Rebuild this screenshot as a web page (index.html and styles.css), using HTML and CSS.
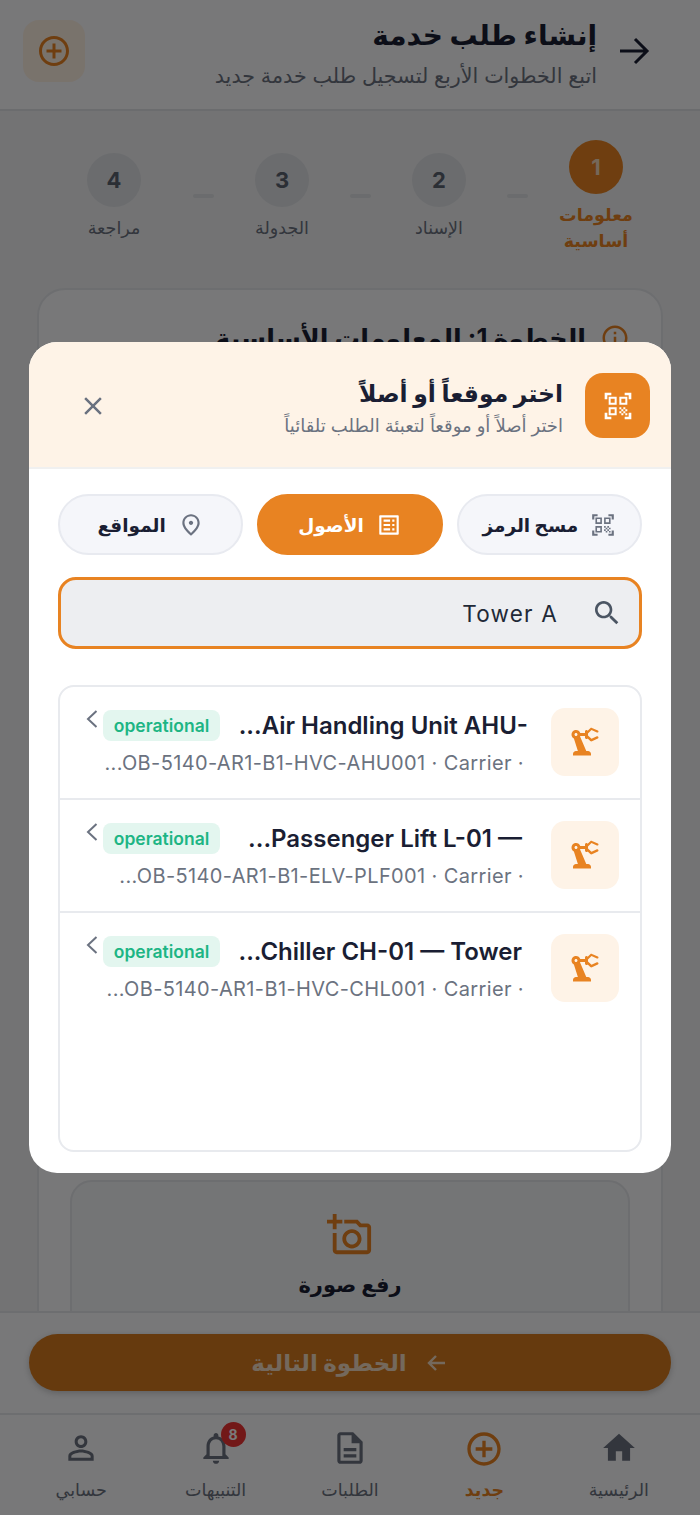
FILE: index.html
```html
<!DOCTYPE html>
<html lang="ar" dir="rtl">
<head>
<meta charset="utf-8">
<title>إنشاء طلب خدمة</title>
<link rel="stylesheet" href="styles.css">
</head>
<body>
<svg class="sprite" aria-hidden="true">
  <symbol id="i-robot" viewBox="0 0 24 24"><path d="M19.93,8.21l-3.6,1.68L14,7.7V6.3l2.33-2.33l3.6,1.68c.38.18.82.01 1-.36.18-.38.01-.82-.36-1L16.65,2.6c-.38-.18-.83-.1-1.13.2l-1.74,1.74C13.6,4.16,13.32,4,13,4c-.55,0-1,.45-1,1v1H8.82C8.34,4.65,6.98,3.73,5.4,4.07c-1.16.25-2.15,1.25-2.36,2.43c-.24,1.36.44,2.6,1.56,3.21L7.25,18H6c-1.1,0-2,.9-2,2v1h12v-1c0-1.1-.9-2-2-2h-1.15L8.72,8.39c.08-.12.1-.29.1-.39H12v1c0,.55.45,1,1,1c.32,0,.6-.16.78-.4l1.74,1.74c.3.3.75.38,1.13.2l3.92-1.83c.38-.18.54-.62.36-1C20.75,8.2,20.31,8.03,19.93,8.21z M6,8C5.45,8,5,7.55,5,7s.45-1,1-1,1,.45,1,1S6.55,8,6,8z"/></symbol>
  <symbol id="i-qr" viewBox="0 0 24 24"><path d="M9.5 6.5v3h-3v-3h3M11 5H5v6h6V5zm-1.5 9.5v3h-3v-3h3M11 13H5v6h6v-6zm6.5-6.5v3h-3v-3h3M19 5h-6v6h6V5zm-6 8h1.5v1.5H13V13zm1.5 1.5H16V16h-1.5v-1.5zM16 13h1.5v1.5H16V13zm-3 3h1.5v1.5H13V16zm1.5 1.5H16V19h-1.5v-1.5zM16 16h1.5v1.5H16V16zm1.5-1.5H19V16h-1.5v-1.5zm0 3H19V19h-1.5v-1.5zM22 7h-2V4h-3V2h5v5zm0 15v-5h-2v3h-3v2h5zM2 22h5v-2H4v-3H2v5zM2 2v5h2V4h3V2H2z"/></symbol>
  <symbol id="i-pin" viewBox="0 0 24 24"><path d="M12 12c-1.1 0-2-.9-2-2s.9-2 2-2 2 .9 2 2-.9 2-2 2zm6-1.8C18 6.57 15.35 4 12 4s-6 2.57-6 6.2c0 2.34 1.95 5.44 6 9.14 4.05-3.7 6-6.8 6-9.14zM12 2c4.2 0 8 3.22 8 8.2 0 3.32-2.67 7.25-8 11.8-5.33-4.55-8-8.48-8-11.8C4 5.22 7.8 2 12 2z"/></symbol>
  <symbol id="i-list" viewBox="0 0 24 24"><path d="M19 5v14H5V5h14m1.1-2H3.9c-.5 0-.9.4-.9.9v16.2c0 .4.4.9.9.9h16.2c.4 0 .9-.5.9-.9V3.9c0-.5-.5-.9-.9-.9zM7 7h6v2H7V7zm0 4h6v2H7v-2zm0 4h6v2H7zM15 7h2v2h-2zm0 4h2v2h-2zm0 4h2v2h-2z"/></symbol>
  <symbol id="i-search" viewBox="0 0 24 24"><path d="M15.5 14h-.79l-.28-.27C15.41 12.59 16 11.11 16 9.5 16 5.91 13.09 3 9.5 3S3 5.91 3 9.5 5.91 16 9.5 16c1.61 0 3.09-.59 4.23-1.57l.27.28v.79l5 4.99L20.49 19l-4.99-5zm-6 0C7.01 14 5 11.99 5 9.5S7.01 5 9.5 5 14 7.01 14 9.5 11.99 14 9.5 14z"/></symbol>
  <symbol id="i-close" viewBox="0 0 24 24"><path d="M19 6.41L17.59 5 12 10.59 6.41 5 5 6.41 10.59 12 5 17.59 6.41 19 12 13.41 17.59 19 19 17.59 13.41 12z"/></symbol>
  <symbol id="i-add" viewBox="0 0 24 24"><path d="M13 7h-2v4H7v2h4v4h2v-4h4v-2h-4V7zm-1-5C6.48 2 2 6.48 2 12s4.48 10 10 10 10-4.48 10-10S17.52 2 12 2zm0 18c-4.41 0-8-3.59-8-8s3.59-8 8-8 8 3.59 8 8-3.59 8-8 8z"/></symbol>
  <symbol id="i-info" viewBox="0 0 24 24"><path d="M11 7h2v2h-2zm0 4h2v6h-2zm1-9C6.48 2 2 6.48 2 12s4.48 10 10 10 10-4.48 10-10S17.52 2 12 2zm0 18c-4.41 0-8-3.59-8-8s3.59-8 8-8 8 3.59 8 8-3.59 8-8 8z"/></symbol>
  <symbol id="i-photo" viewBox="0 0 24 24"><path d="M21 6h-3.17L16 4H9v2h6.12l1.83 2H21v12H5v-9H3v9c0 1.1.9 2 2 2h16c1.1 0 2-.9 2-2V8c0-1.1-.9-2-2-2zM8 14c0 2.76 2.24 5 5 5s5-2.24 5-5-2.24-5-5-5-5 2.24-5 5zm5-3c1.65 0 3 1.35 3 3s-1.35 3-3 3-3-1.35-3-3 1.35-3 3-3zM5 6h3V4H5V1H3v3H0v2h3v3h2z"/></symbol>
  <symbol id="i-home" viewBox="0 0 24 24"><path d="M10 20v-6h4v6h5v-8h3L12 3 2 12h3v8z"/></symbol>
  <symbol id="i-doc" viewBox="0 0 24 24"><path d="M8 16h8v2H8zm0-4h8v2H8zm6-10H6c-1.1 0-2 .9-2 2v16c0 1.1.89 2 1.99 2H18c1.1 0 2-.9 2-2V8l-6-6zm4 18H6V4h7v5h5v11z"/></symbol>
  <symbol id="i-bell" viewBox="0 0 24 24"><path d="M12 22c1.1 0 2-.9 2-2h-4c0 1.1.9 2 2 2zm6-6v-5c0-3.07-1.63-5.64-4.5-6.32V4c0-.83-.67-1.5-1.5-1.5s-1.5.67-1.5 1.5v.68C7.64 5.36 6 7.92 6 11v5l-2 2v1h16v-1l-2-2zm-2 1H8v-6c0-2.48 1.51-4.5 4-4.5s4 2.02 4 4.5v6z"/></symbol>
  <symbol id="i-user" viewBox="0 0 24 24"><path d="M12 5.9c1.16 0 2.1.94 2.1 2.1s-.94 2.1-2.1 2.1S9.9 9.16 9.9 8s.94-2.1 2.1-2.1m0 9c2.97 0 6.1 1.46 6.1 2.1v1.1H5.9V17c0-.64 3.13-2.1 6.1-2.1M12 4C9.79 4 8 5.79 8 8s1.79 4 4 4 4-1.79 4-4-1.79-4-4-4zm0 9c-2.67 0-8 1.34-8 4v3h16v-3c0-2.66-5.33-4-8-4z"/></symbol>
</svg>

<div class="page">
  <header class="top">
    <svg class="top-back" viewBox="0 0 32 32"><path d="M2 16h27M17 4l12 12-12 12"/></svg>
    <div class="top-text">
      <h1 class="top-title">إنشاء طلب خدمة</h1>
      <p class="top-sub">اتبع الخطوات الأربع لتسجيل طلب خدمة جديد</p>
    </div>
    <div class="top-tile"><svg class="ic ic-36"><use href="#i-add"/></svg></div>
  </header>

  <main class="main">
    <div class="steps">
      <div class="step step-on"><span class="step-num">1</span><span class="step-label">معلومات<br>أساسية</span></div>
      <span class="dash"></span>
      <div class="step"><span class="step-num">2</span><span class="step-label">الإسناد</span></div>
      <span class="dash"></span>
      <div class="step"><span class="step-num">3</span><span class="step-label">الجدولة</span></div>
      <span class="dash"></span>
      <div class="step step-last"><span class="step-num">4</span><span class="step-label">مراجعة</span></div>
    </div>

    <section class="card">
      <div class="card-head">
        <svg class="ic ic-30"><use href="#i-info"/></svg>
        <h2 class="card-title">الخطوة 1: المعلومات الأساسية</h2>
      </div>
      <div class="upload">
        <svg class="ic ic-46"><use href="#i-photo"/></svg>
        <strong class="upload-title">رفع صورة</strong>
      </div>
    </section>
  </main>

  <div class="action">
    <button class="next"><svg class="next-arrow" viewBox="0 0 24 24"><path d="M20 12H4M11 5l-7 7 7 7"/></svg><span>الخطوة التالية</span></button>
  </div>

  <nav class="nav">
    <a class="nav-item"><svg class="ic ic-38"><use href="#i-home"/></svg><span>الرئيسية</span></a>
    <a class="nav-item nav-on"><svg class="ic ic-40"><use href="#i-add"/></svg><span>جديد</span></a>
    <a class="nav-item"><svg class="ic ic-38"><use href="#i-doc"/></svg><span>الطلبات</span></a>
    <a class="nav-item"><span class="bell"><svg class="ic ic-38"><use href="#i-bell"/></svg><b class="badge">8</b></span><span>التنبيهات</span></a>
    <a class="nav-item"><svg class="ic ic-38"><use href="#i-user"/></svg><span>حسابي</span></a>
  </nav>

  <div class="overlay">
    <div class="modal">
      <div class="modal-head">
        <div class="modal-tile"><svg class="ic ic-32"><use href="#i-qr"/></svg></div>
        <div class="modal-text">
          <h3 class="modal-title">اختر موقعاً أو أصلاً</h3>
          <p class="modal-sub">اختر أصلاً أو موقعاً لتعبئة الطلب تلقائياً</p>
        </div>
        <svg class="ic ic-30 modal-close"><use href="#i-close"/></svg>
      </div>
      <div class="modal-body">
        <div class="tabs">
          <button class="tab"><svg class="ic ic-26"><use href="#i-qr"/></svg><span>مسح الرمز</span></button>
          <button class="tab tab-on"><svg class="ic ic-26"><use href="#i-list"/></svg><span>الأصول</span></button>
          <button class="tab"><svg class="ic ic-26"><use href="#i-pin"/></svg><span>المواقع</span></button>
        </div>
        <div class="search">
          <svg class="ic ic-32"><use href="#i-search"/></svg>
          <span class="search-text">Tower A</span>
        </div>
        <div class="list">
          <div class="row">
            <div class="row-tile"><svg class="ic ic-36"><use href="#i-robot"/></svg></div>
            <div class="row-body">
              <div class="row-top"><span class="row-title" dir="ltr">...Air Handling Unit AHU-</span><span class="pill">operational</span></div>
              <div class="row-sub" dir="ltr">...OB-5140-AR1-B1-HVC-AHU001 · Carrier ·</div>
            </div>
            <svg class="chev" viewBox="0 0 12 18"><path d="M10.5 1L2 9l8.5 8"/></svg>
          </div>
          <div class="row">
            <div class="row-tile"><svg class="ic ic-36"><use href="#i-robot"/></svg></div>
            <div class="row-body">
              <div class="row-top"><span class="row-title" dir="ltr">...Passenger Lift L-01 —&nbsp;</span><span class="pill">operational</span></div>
              <div class="row-sub" dir="ltr">...OB-5140-AR1-B1-ELV-PLF001 · Carrier ·</div>
            </div>
            <svg class="chev" viewBox="0 0 12 18"><path d="M10.5 1L2 9l8.5 8"/></svg>
          </div>
          <div class="row">
            <div class="row-tile"><svg class="ic ic-36"><use href="#i-robot"/></svg></div>
            <div class="row-body">
              <div class="row-top"><span class="row-title" dir="ltr">...Chiller CH-01 — Tower&nbsp;</span><span class="pill">operational</span></div>
              <div class="row-sub" dir="ltr">...OB-5140-AR1-B1-HVC-CHL001 · Carrier ·</div>
            </div>
            <svg class="chev" viewBox="0 0 12 18"><path d="M10.5 1L2 9l8.5 8"/></svg>
          </div>
        </div>
      </div>
    </div>
  </div>
</div>
</body>
</html>
```

FILE: styles.css
```css
* { box-sizing: border-box; }
html, body { margin: 0; padding: 0; }
body { font-family: Inter, "DejaVu Sans", sans-serif; color: #1a1e33; background: #f0f1f3; }
h1, h2, h3, p { margin: 0; }
button { font: inherit; border: 0; }
.sprite { display: none; }
.ic { fill: currentColor; display: block; flex: none; }
.ic-26 { width: 26px; height: 26px; }
.ic-30 { width: 30px; height: 30px; }
.ic-32 { width: 32px; height: 32px; }
.ic-36 { width: 36px; height: 36px; }
.ic-38 { width: 38px; height: 38px; }
.ic-40 { width: 40px; height: 40px; }
.ic-46 { width: 46px; height: 46px; }

.page { position: relative; width: 700px; height: 1515px; overflow: hidden; display: flex; flex-direction: column; background: #f0f1f3; }

.top { flex: none; height: 111px; display: flex; align-items: center; padding: 0 50px 8px 15px; gap: 21px; background: #fafafc; border-bottom: 2px solid #dfe1e6; }
.top-back { width: 32px; height: 32px; flex: none; fill: none; stroke: #1a1e33; stroke-width: 3; }
.top-text { flex: 1; }
.top-title { font-size: 28px; font-weight: 700; line-height: 49px; }
.top-sub { font-size: 20.7px; line-height: 31px; color: #6b7280; }
.top-tile { width: 62px; height: 62px; border-radius: 16px; background: #fdf0e2; color: #e88322; display: flex; align-items: center; justify-content: center; margin-left: 8px; }

.main { flex: 1; min-height: 0; overflow: hidden; }
.steps { height: 177px; display: flex; align-items: center; justify-content: flex-start; padding: 0 49px 6px 0; }
.step { width: 110px; flex: none; display: flex; flex-direction: column; align-items: center; gap: 8px; }
.step-last { margin-right: 11px; }
.step-num { width: 54px; height: 54px; border-radius: 50%; background: #dfe1e6; color: #5b6270; font-size: 22px; font-weight: 700; display: flex; align-items: center; justify-content: center; }
.step-label { font-size: 17.5px; line-height: 26px; color: #6b7280; text-align: center; }
.step-on .step-num { background: #e88322; color: #f5d9ba; }
.step-on .step-label { color: #e88322; font-weight: 700; }
.dash { flex: none; width: 21px; height: 4px; border-radius: 2px; background: #dfe1e6; margin: 0 13px 2px; }

.card { margin: 0 37px; height: 1100px; background: #fafafc; border: 2px solid #e4e6ea; border-radius: 28px; padding: 26px 31px; }
.card-head { display: flex; align-items: center; gap: 14px; color: #e88322; }
.card-title { font-size: 25.5px; font-weight: 700; color: #1a1e33; line-height: 44px; }
.upload { margin-top: 820px; height: 220px; border: 2px solid #e4e6ea; border-radius: 22px; background: #f3f4f7; display: flex; flex-direction: column; align-items: center; padding-top: 30px; color: #e88322; gap: 14px; }
.upload-title { font-size: 21px; color: #1a1e33; }

.action { flex: none; height: 102px; padding: 21px 29px 0; background: #fafafc; border-top: 2px solid #e4e6ea; }
.next { width: 100%; height: 57px; border-radius: 29px; background: #d67a1f; color: #f3dcc3; font-size: 23px; font-weight: 700; display: flex; align-items: center; justify-content: center; gap: 18px; box-shadow: 0 2px 6px rgba(0,0,0,.2); }
.next-arrow { width: 24px; height: 24px; fill: none; stroke: currentColor; stroke-width: 2.4; }

.nav { flex: none; height: 102px; background: #fafafc; border-top: 2px solid #e4e6ea; display: grid; grid-template-columns: repeat(5, 1fr); padding: 0 14px; color: #6b7280; }
.nav-item { display: flex; flex-direction: column; align-items: center; padding-top: 14px; font-size: 17.5px; gap: 8px; }
.nav-item span { line-height: 30px; }
.nav-on { color: #e88322; font-weight: 600; }
.nav-on span { margin-top: -2px; }
.nav .bell { position: relative; display: block; height: 38px; line-height: normal; }
.badge { position: absolute; top: -7px; left: 24px; width: 25px; height: 25px; border-radius: 50%; background: #e33; color: #fff; font-size: 14px; display: flex; align-items: center; justify-content: center; }

.overlay { position: absolute; inset: 0; background: rgba(0,0,0,.52); display: flex; align-items: flex-start; justify-content: center; padding-top: 342px; }
.modal { width: 642px; height: 831px; background: #fff; border-radius: 28px; overflow: hidden; display: flex; flex-direction: column; }
.modal-head { flex: none; height: 127px; background: #fef3e7; border-bottom: 2px solid #f0f0f0; display: flex; align-items: center; padding: 2px 21px 0 49px; gap: 22px; }
.modal-tile { width: 65px; height: 65px; border-radius: 18px; background: #e88322; color: #fff; display: flex; align-items: center; justify-content: center; }
.modal-text { flex: 1; padding-top: 4px; }
.modal-title { font-size: 23.5px; line-height: 36px; font-weight: 700; }
.modal-sub { font-size: 18px; line-height: 28px; color: #6b7280; }
.modal-close { color: #6b7280; }
.modal-body { flex: 1; padding: 25px 29px 21px; display: flex; flex-direction: column; }
.tabs { display: flex; gap: 14px; }
.tab { flex: 1; height: 61px; border-radius: 31px; background: #f5f6fa; border: 2px solid #e8eaf0; color: #1a1e33; font-size: 18.5px; font-weight: 700; display: flex; align-items: center; justify-content: center; gap: 12px; }
.tab .ic { color: #6b7280; }
.tab-on { background: #e88322; border-color: #e88322; color: #fff; }
.tab-on .ic { color: #fff; }
.search { margin-top: 22px; height: 72px; border: 3px solid #e88322; border-radius: 18px; background: #edeef1; display: flex; align-items: center; padding: 0 16px 0 0; gap: 33px; color: #4b5563; }
.search-text { font-size: 22.5px; letter-spacing: 1.2px; color: #1f2937; }
.list { margin-top: 36px; flex: 1; border: 2px solid #e8eaee; border-radius: 16px; overflow: hidden; }
.row { height: 113px; border-bottom: 2px solid #e8eaee; display: flex; align-items: flex-start; padding: 21px 21px 0 26px; gap: 23px; }
.row:last-child { border-bottom: 0; }
.row-tile { width: 68px; height: 68px; border-radius: 14px; background: #fef3e7; color: #e88322; display: flex; align-items: center; justify-content: center; flex: none; }
.row-body { flex: 1; display: flex; flex-direction: column; }
.row-top { display: flex; align-items: center; justify-content: space-between; height: 34px; }
.row-title { font-size: 24px; font-weight: 600; white-space: nowrap; }
.row-sub { font-size: 20px; letter-spacing: .37px; color: #6b7280; text-align: right; margin: 9px 4px 0 0; white-space: nowrap; }
.pill { width: 117px; height: 31px; border-radius: 8px; background: #e3f6ef; color: #1db584; font-size: 17.5px; font-weight: 600; display: flex; align-items: center; justify-content: center; }
.chev { flex: none; width: 12px; height: 18px; margin: 2px -18px 0 0; fill: none; stroke: #6b7280; stroke-width: 2; }
```
